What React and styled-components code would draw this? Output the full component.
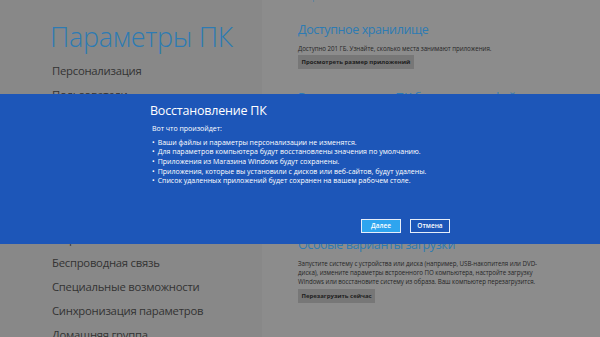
import React from 'react';
import styled, { createGlobalStyle } from 'styled-components';

const navItems = [
  'Персонализация',
  'Пользователи',
  'Уведомления',
  'Поиск',
  'Общий доступ',
  'Общие',
  'Конфиденциальность',
  'Устройства',
  'Беспроводная связь',
  'Специальные возможности',
  'Синхронизация параметров',
  'Домашняя группа',
  'Центр обновления Windows'
];

const sections = [
  {
    title: 'Доступное хранилище',
    text: ['Доступно 201 ГБ. Узнайте, сколько места занимают приложения.'],
    button: 'Просмотреть размер приложений',
    gap: 18.5
  },
  {
    title: 'Восстановление ПК без удаления файлов',
    text: [
      'Вы можете восстановить компьютер, не теряя фотографии, музыку,',
      'видеофайлы и другие личные файлы.'
    ],
    button: 'Начать',
    gap: 15
  },
  {
    title: 'Удаление всех данных и переустановка Windows',
    text: [
      'Если вы хотите утилизировать компьютер или начать все заново, можно',
      'полностью восстановить заводские настройки компьютера.'
    ],
    button: 'Начать',
    gap: 14.5
  },
  {
    title: 'Особые варианты загрузки',
    text: [
      'Запустите систему с устройства или диска (например, USB-накопителя или DVD-',
      'диска), измените параметры встроенного ПО компьютера, настройте загрузку',
      'Windows или восстановите систему из образа. Ваш компьютер перезагрузится.'
    ],
    button: 'Перезагрузить сейчас',
    gap: 16
  }
];

const changes = [
  'Ваши файлы и параметры персонализации не изменятся.',
  'Для параметров компьютера будут восстановлены значения по умолчанию.',
  'Приложения из Магазина Windows будут сохранены.',
  'Приложения, которые вы установили с дисков или веб-сайтов, будут удалены.',
  'Список удаленных приложений будет сохранен на вашем рабочем столе.'
];

function App() {
  return (
    <>
      <GlobalStyle />
      <Screen>
        <LeftPane>
          <PageTitle>Параметры ПК</PageTitle>
          <Nav>
            {navItems.map(item => (
              <NavItem key={item}>{item}</NavItem>
            ))}
          </Nav>
        </LeftPane>

        <RightPane>
          <TopLink>Настройки языка</TopLink>
          {sections.map(section => (
            <Section key={section.title} $gap={section.gap}>
              <SectionTitle>{section.title}</SectionTitle>
              <SectionText>
                {section.text.map((line, i) => (
                  <div key={i}>{line}</div>
                ))}
              </SectionText>
              <GrayButton>{section.button}</GrayButton>
            </Section>
          ))}
        </RightPane>

        <Overlay>
          <Band>
            <Dialog>
              <DialogTitle>Восстановление ПК</DialogTitle>
              <Intro>Вот что произойдет:</Intro>
              <Changes>
                {changes.map(item => (
                  <li key={item}>{item}</li>
                ))}
              </Changes>
              <Buttons>
                <DialogButton $primary>Далее</DialogButton>
                <DialogButton>Отмена</DialogButton>
              </Buttons>
            </Dialog>
          </Band>
        </Overlay>
      </Screen>
    </>
  );
}

const GlobalStyle = createGlobalStyle`
  html, body {
    margin: 0;
    padding: 0;
    background: #8b8b8b;
    overflow: hidden;
  }
  * {
    box-sizing: border-box;
  }
`;

const Screen = styled.div`
  position: relative;
  width: 600px;
  height: 337px;
  display: grid;
  grid-template-columns: 262px 1fr;
  overflow: hidden;
  font-family: "Open Sans", "Noto Sans", sans-serif;
`;

const LeftPane = styled.div`
  background: #888888;
  padding: 20px 0 0 50px;
`;

const PageTitle = styled.h1`
  margin: 0 0 5px;
  font-size: 27px;
  line-height: 34px;
  font-weight: 300;
  color: #2d7bb3;
  letter-spacing: -0.3px;
`;

const Nav = styled.ul`
  list-style: none;
  margin: 0;
  padding: 0 0 0 2px;
`;

const NavItem = styled.li`
  height: 24px;
  line-height: 24px;
  font-size: 11.3px;
  letter-spacing: -0.25px;
  color: #333333;
  white-space: nowrap;
`;

const RightPane = styled.div`
  background: #8c8c8c;
  padding-left: 36px;
`;

const TopLink = styled.div`
  margin: -7px 0 17px;
  font-size: 6.5px;
  line-height: 10px;
  color: #2d78b0;
`;

const Section = styled.section`
  margin-bottom: ${p => p.$gap}px;
`;

const SectionTitle = styled.h2`
  margin: 0;
  font-size: 12.5px;
  line-height: 20px;
  letter-spacing: -0.4px;
  font-weight: 400;
  color: #2d7bb3;
  white-space: nowrap;
`;

const SectionText = styled.div`
  margin-top: 3.5px;
  font-size: 6.2px;
  line-height: 9.4px;
  letter-spacing: -0.05px;
  color: #262626;
  white-space: nowrap;
`;

const GrayButton = styled.div`
  display: flex;
  align-items: center;
  width: fit-content;
  height: 14px;
  margin-top: 2.5px;
  padding: 0 3.5px;
  background: #777777;
  font-size: 6px;
  font-weight: 700;
  line-height: 14px;
  color: #1e1e1e;
  white-space: nowrap;
`;

const Overlay = styled.div`
  position: absolute;
  inset: 0;
  display: flex;
  align-items: center;
`;

const Band = styled.div`
  width: 100%;
  height: 150px;
  background: #1d56b8;
`;

const Dialog = styled.div`
  width: 300px;
  height: 100%;
  margin: 0 auto;
  padding: 7px 0 11px;
  display: flex;
  flex-direction: column;
  color: #ffffff;
`;

const DialogTitle = styled.div`
  font-size: 12.5px;
  line-height: 20px;
  letter-spacing: -0.2px;
  font-weight: 400;
`;

const Intro = styled.div`
  margin-top: 3px;
  padding-left: 2px;
  font-size: 7px;
  line-height: 10px;
`;

const Changes = styled.ul`
  list-style: none;
  margin: 4px 0 0;
  padding: 0 0 0 2px;
  font-size: 7px;
  line-height: 9.7px;
  white-space: nowrap;

  li::before {
    content: '•';
    margin-right: 3px;
  }
`;

const Buttons = styled.div`
  margin-top: auto;
  display: flex;
  justify-content: flex-end;
  gap: 9px;
`;

const DialogButton = styled.div`
  width: 40px;
  height: 14px;
  display: flex;
  align-items: center;
  justify-content: center;
  border: 1px solid #e6eefa;
  background: ${p => (p.$primary ? '#2ea5ef' : 'transparent')};
  font-size: 6.5px;
  font-weight: 600;
  color: #ffffff;
`;

export default App;
